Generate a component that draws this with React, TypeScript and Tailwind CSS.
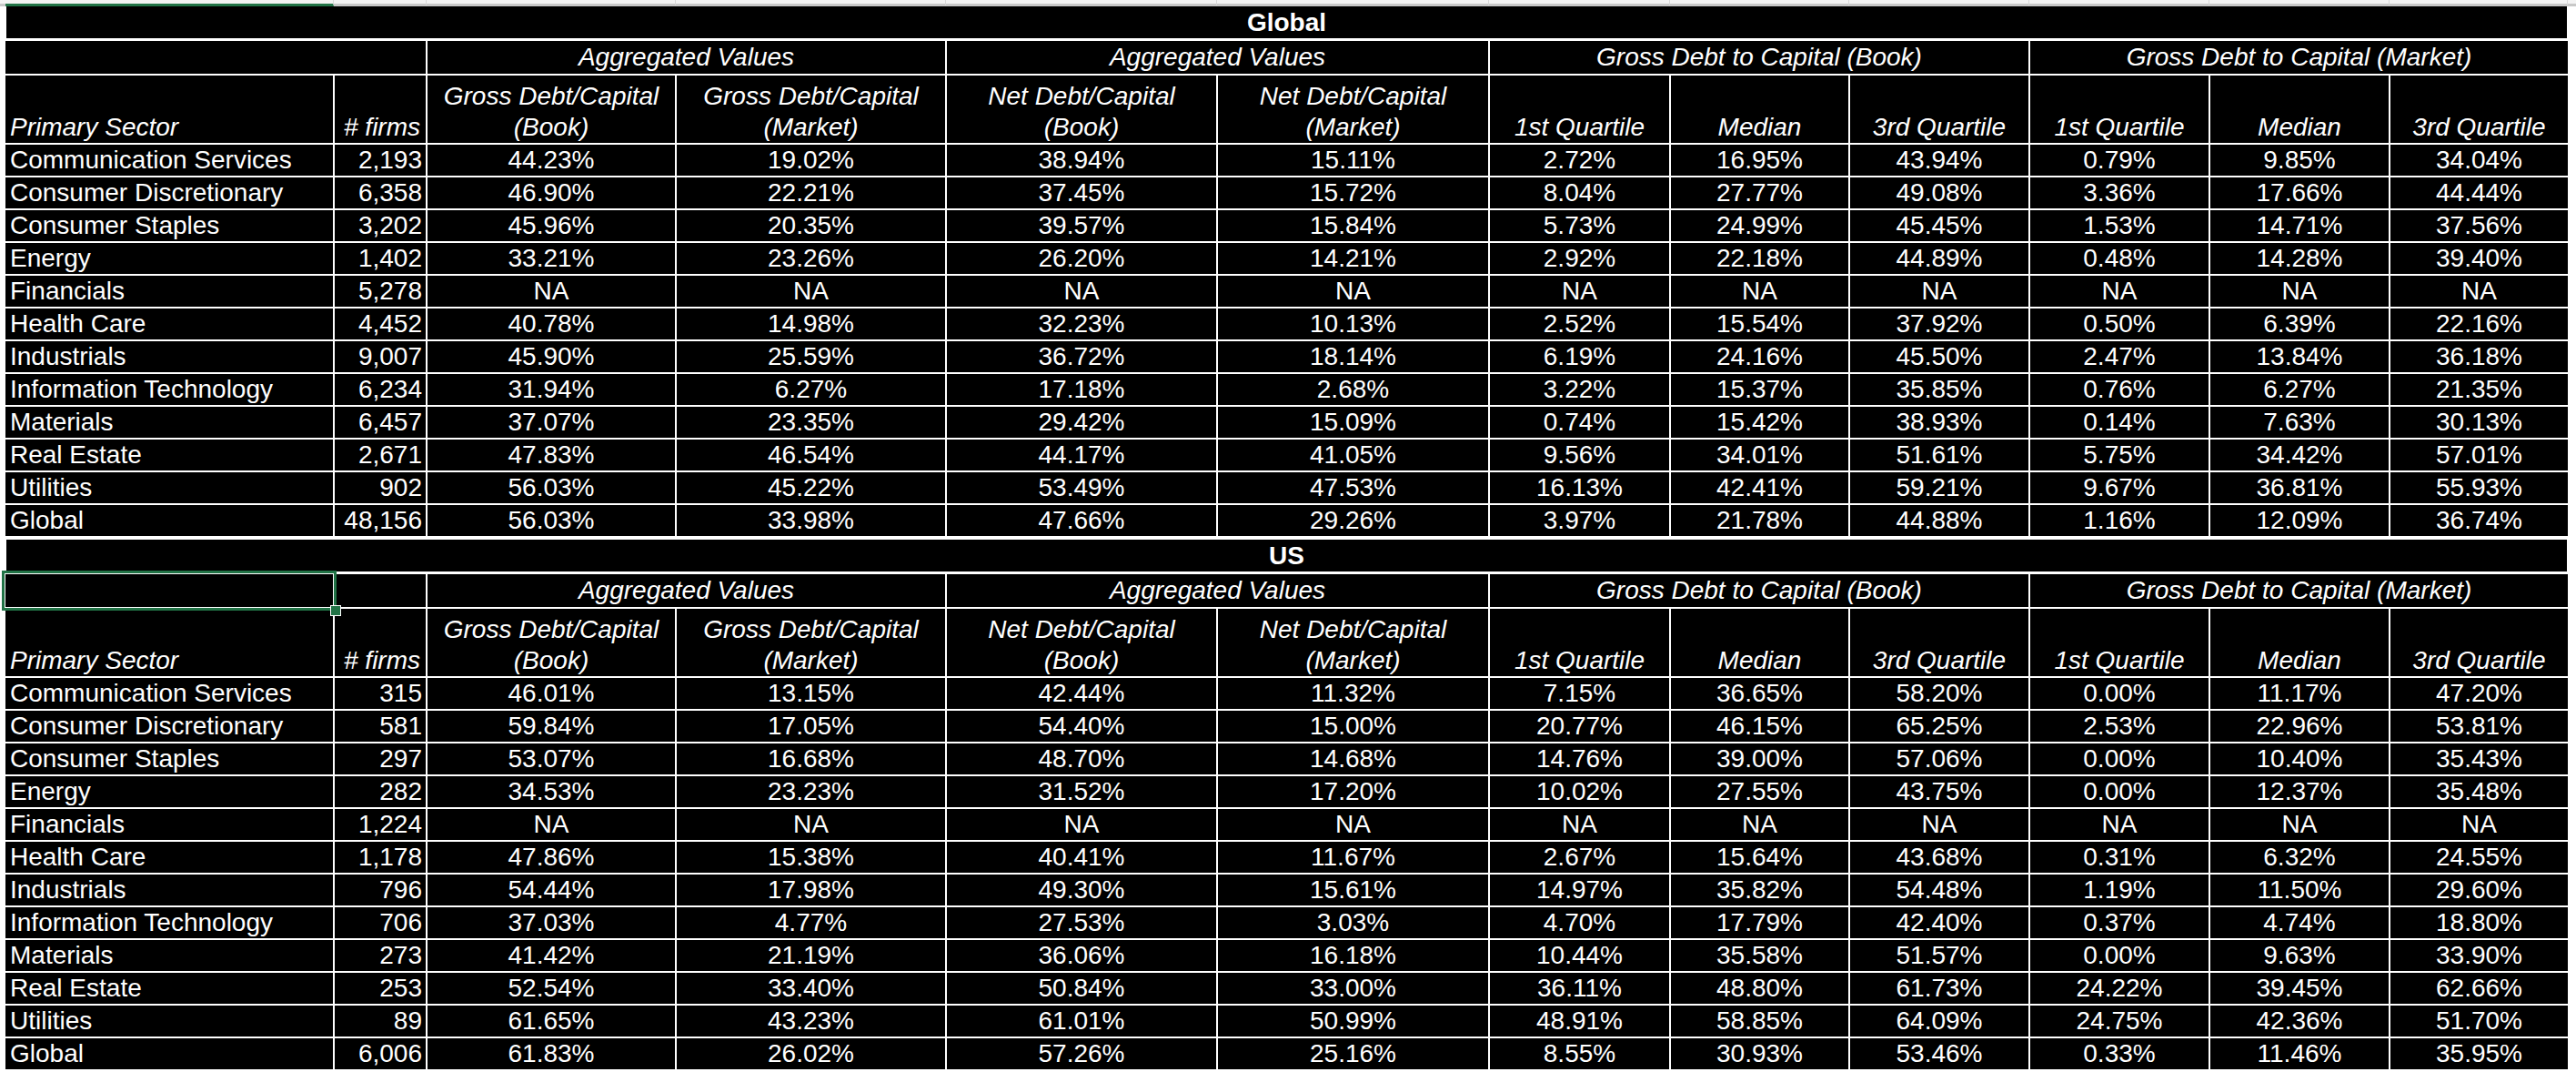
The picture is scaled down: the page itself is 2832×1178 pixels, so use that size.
import React from 'react';

type Row = [string, string, ...string[]];

const NA = ['NA', 'NA', 'NA', 'NA', 'NA', 'NA', 'NA', 'NA', 'NA', 'NA'];

const globalRows: Row[] = [
    ['Communication Services', '2,193', '44.23%', '19.02%', '38.94%', '15.11%', '2.72%', '16.95%', '43.94%', '0.79%', '9.85%', '34.04%'],
    ['Consumer Discretionary', '6,358', '46.90%', '22.21%', '37.45%', '15.72%', '8.04%', '27.77%', '49.08%', '3.36%', '17.66%', '44.44%'],
    ['Consumer Staples', '3,202', '45.96%', '20.35%', '39.57%', '15.84%', '5.73%', '24.99%', '45.45%', '1.53%', '14.71%', '37.56%'],
    ['Energy', '1,402', '33.21%', '23.26%', '26.20%', '14.21%', '2.92%', '22.18%', '44.89%', '0.48%', '14.28%', '39.40%'],
    ['Financials', '5,278', ...NA],
    ['Health Care', '4,452', '40.78%', '14.98%', '32.23%', '10.13%', '2.52%', '15.54%', '37.92%', '0.50%', '6.39%', '22.16%'],
    ['Industrials', '9,007', '45.90%', '25.59%', '36.72%', '18.14%', '6.19%', '24.16%', '45.50%', '2.47%', '13.84%', '36.18%'],
    ['Information Technology', '6,234', '31.94%', '6.27%', '17.18%', '2.68%', '3.22%', '15.37%', '35.85%', '0.76%', '6.27%', '21.35%'],
    ['Materials', '6,457', '37.07%', '23.35%', '29.42%', '15.09%', '0.74%', '15.42%', '38.93%', '0.14%', '7.63%', '30.13%'],
    ['Real Estate', '2,671', '47.83%', '46.54%', '44.17%', '41.05%', '9.56%', '34.01%', '51.61%', '5.75%', '34.42%', '57.01%'],
    ['Utilities', '902', '56.03%', '45.22%', '53.49%', '47.53%', '16.13%', '42.41%', '59.21%', '9.67%', '36.81%', '55.93%'],
    ['Global', '48,156', '56.03%', '33.98%', '47.66%', '29.26%', '3.97%', '21.78%', '44.88%', '1.16%', '12.09%', '36.74%'],
];

const usRows: Row[] = [
    ['Communication Services', '315', '46.01%', '13.15%', '42.44%', '11.32%', '7.15%', '36.65%', '58.20%', '0.00%', '11.17%', '47.20%'],
    ['Consumer Discretionary', '581', '59.84%', '17.05%', '54.40%', '15.00%', '20.77%', '46.15%', '65.25%', '2.53%', '22.96%', '53.81%'],
    ['Consumer Staples', '297', '53.07%', '16.68%', '48.70%', '14.68%', '14.76%', '39.00%', '57.06%', '0.00%', '10.40%', '35.43%'],
    ['Energy', '282', '34.53%', '23.23%', '31.52%', '17.20%', '10.02%', '27.55%', '43.75%', '0.00%', '12.37%', '35.48%'],
    ['Financials', '1,224', ...NA],
    ['Health Care', '1,178', '47.86%', '15.38%', '40.41%', '11.67%', '2.67%', '15.64%', '43.68%', '0.31%', '6.32%', '24.55%'],
    ['Industrials', '796', '54.44%', '17.98%', '49.30%', '15.61%', '14.97%', '35.82%', '54.48%', '1.19%', '11.50%', '29.60%'],
    ['Information Technology', '706', '37.03%', '4.77%', '27.53%', '3.03%', '4.70%', '17.79%', '42.40%', '0.37%', '4.74%', '18.80%'],
    ['Materials', '273', '41.42%', '21.19%', '36.06%', '16.18%', '10.44%', '35.58%', '51.57%', '0.00%', '9.63%', '33.90%'],
    ['Real Estate', '253', '52.54%', '33.40%', '50.84%', '33.00%', '36.11%', '48.80%', '61.73%', '24.22%', '39.45%', '62.66%'],
    ['Utilities', '89', '61.65%', '43.23%', '61.01%', '50.99%', '48.91%', '58.85%', '64.09%', '24.75%', '42.36%', '51.70%'],
    ['Global', '6,006', '61.83%', '26.02%', '57.26%', '25.16%', '8.55%', '30.93%', '53.46%', '0.33%', '11.46%', '35.95%'],
];

// spreadsheet column widths incl. gridline, used by the header strip
const colWidths = [361, 102, 274, 297, 298, 299, 199, 197, 198, 198, 198, 196];

const cell = 'bg-black flex items-end leading-[34px] whitespace-nowrap overflow-hidden';
const agg = 'bg-black flex items-center justify-center italic leading-[36px] whitespace-nowrap';

const ColumnStrip: React.FC = () => (
    <div className="flex h-[7px]">
        <div className="w-[6px] bg-[#f3f3f3] border-b-[3px] border-[#c8c8c8]" />
        {colWidths.map((w, i) => (
            <div
                key={i}
                className={`bg-[#f3f3f3] border-b-[3px] border-r border-r-[#d9d9d9] ${i === 0 ? 'border-b-[#217346]' : 'border-b-[#c8c8c8]'}`}
                style={{ width: w }}
            />
        ))}
        <div className="flex-1 bg-[#f3f3f3] border-b-[3px] border-[#c8c8c8]" />
    </div>
);

const Block: React.FC<{ title: string; rows: Row[]; selected?: boolean }> = ({ title, rows, selected }) => (
    <div className="flex flex-col gap-[3px]">
        <div className="ml-[1px] w-[2815px] h-[35px] bg-black flex items-center justify-center font-bold leading-[35px]">
            {title}
        </div>
        <div className="grid grid-cols-[360px_100px_272px_295px_296px_297px_197px_195px_196px_196px_196px_195px] grid-rows-[36px_74px_repeat(12,34px)] gap-[2px] w-[2817px]">
            {/* aggregated row */}
            {selected ? (
                <>
                    <div className="bg-black relative">
                        <div className="absolute -inset-[4px] border-[3px] border-[#217346] pointer-events-none" />
                        <div className="absolute -right-[9px] -bottom-[10px] w-[12px] h-[12px] bg-[#217346] border border-white" />
                    </div>
                    <div className="bg-black" />
                </>
            ) : (
                <div className="col-span-2 bg-black" />
            )}
            <div className={`${agg} col-span-2`}>Aggregated Values</div>
            <div className={`${agg} col-span-2`}>Aggregated Values</div>
            <div className={`${agg} col-span-3`}>Gross Debt to Capital (Book)</div>
            <div className={`${agg} col-span-3`}>Gross Debt to Capital (Market)</div>

            {/* header row */}
            <div className={`${cell} pl-[5px] italic`}>Primary Sector</div>
            <div className={`${cell} justify-end pr-[6px] italic`}># firms</div>
            {[
                ['Gross Debt/Capital', '(Book)'],
                ['Gross Debt/Capital', '(Market)'],
                ['Net Debt/Capital', '(Book)'],
                ['Net Debt/Capital', '(Market)'],
            ].map(([a, b], i) => (
                <div key={i} className={`${cell} justify-center text-center italic`}>
                    <div>
                        {a}
                        <br />
                        {b}
                    </div>
                </div>
            ))}
            {['1st Quartile', 'Median', '3rd Quartile', '1st Quartile', 'Median', '3rd Quartile'].map((h, i) => (
                <div key={i} className={`${cell} justify-center italic`}>
                    {h}
                </div>
            ))}

            {/* data rows */}
            {rows.map((r) =>
                r.map((v, j) => (
                    <div
                        key={r[0] + j}
                        className={`${cell} ${j === 0 ? 'pl-[5px]' : j === 1 ? 'justify-end pr-[4px]' : 'justify-center'}`}
                    >
                        {v}
                    </div>
                )),
            )}
        </div>
    </div>
);

export default function App() {
    return (
        <div className="min-h-screen w-[2832px] bg-white text-white text-[28px] font-['Liberation_Sans',Arial,sans-serif]">
            <ColumnStrip />
            <div className="pl-[6px] flex flex-col gap-[4px]">
                <Block title="Global" rows={globalRows} />
                <Block title="US" rows={usRows} selected />
            </div>
        </div>
    );
}
